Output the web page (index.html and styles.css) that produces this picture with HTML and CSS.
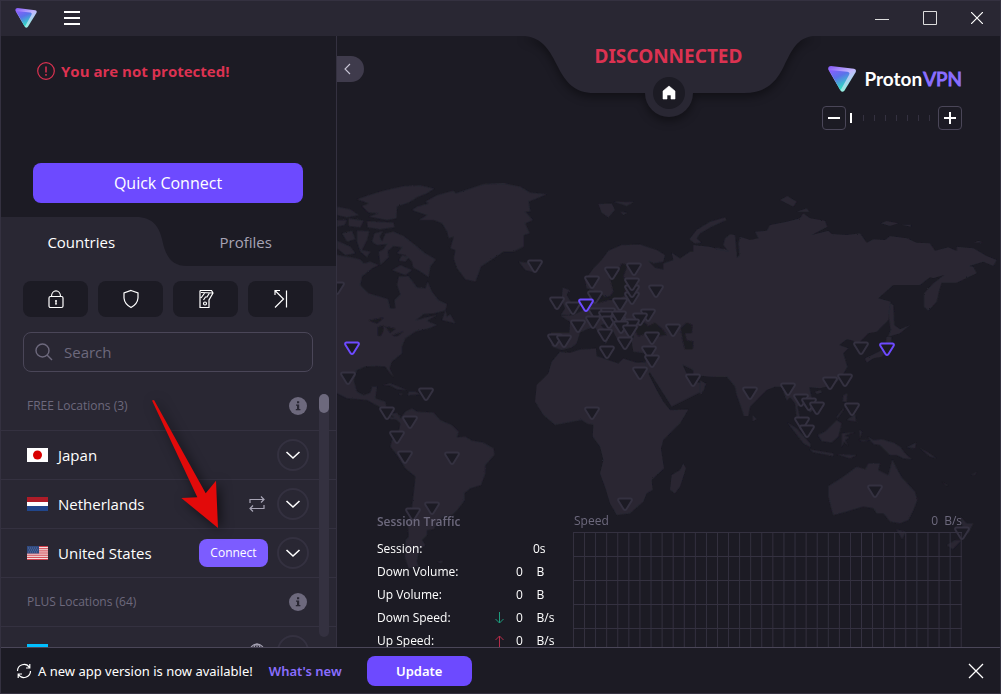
FILE: index.html
```html
<!DOCTYPE html>
<html lang="en">
<head>
<meta charset="utf-8">
<meta name="viewport" content="width=device-width, initial-scale=1">
<title>ProtonVPN</title>
<link rel="stylesheet" href="styles.css">
</head>
<body>
<svg class="defs" aria-hidden="true">
  <defs>
    <linearGradient id="logo-face" x1="0" y1="0" x2=".5" y2="1"><stop offset="0" stop-color="#8d5cff"/><stop offset=".45" stop-color="#5b72ea"/><stop offset="1" stop-color="#2fe0c4"/></linearGradient>
    <linearGradient id="logo-edge" x1="0" y1="0" x2=".6" y2="1"><stop offset="0" stop-color="#8355f7"/><stop offset=".5" stop-color="#c4b8ff"/><stop offset="1" stop-color="#8ff5dc"/></linearGradient>
    <symbol id="logo" viewBox="0 0 28 26"><path d="M3 0 26 2.800Q29 3.600 27.500 6.500L16.500 24.500Q14.300 27 12.500 24.500L.4 3.800Q-.6.3 3 0Z" fill="url(#logo-edge)"/><path d="M1 4 19.500 5.800Q22.500 6.500 21 9L13 23.500Q12.300 24 11.800 23.200Z" fill="url(#logo-face)"/></symbol>
    <symbol id="chevron" viewBox="0 0 16 16"><path d="M1.500 5 8 11 14.500 5" fill="none" stroke="#fff" stroke-width="1.600"/></symbol>
    <symbol id="info" viewBox="0 0 18 18"><circle cx="9" cy="9" r="9" fill="#6d697d"/><path d="M8 4.300h2.200v2H8ZM7 7.500h3.200V12h1.200v1.200H6.800V12H8V8.700H7Z" fill="#292733"/></symbol>
    <symbol id="pin" viewBox="-8 -7 16 14" overflow="visible"><path d="M-5.500-5.500H5.500Q7.700-5 6.500-3L1.400 5.200Q0 7-1.400 5.200L-6.500-3Q-7.700-5-5.500-5.500Z"/></symbol>
    <filter id="coast" x="0" y="0" width="1" height="1"><feTurbulence type="fractalNoise" baseFrequency=".12" numOctaves="3" seed="4"/><feDisplacementMap in="SourceGraphic" scale="5"/></filter>
  </defs>
</svg>

<header class="titlebar">
  <svg class="titlebar-logo" width="22" height="20" role="img" aria-label="ProtonVPN"><use href="#logo"/></svg>
  <button class="icon-btn menu-btn" aria-label="Menu"><svg width="16" height="14"><path d="M0 1h16M0 7h16M0 13h16" stroke="#fff" stroke-width="2"/></svg></button>
  <div class="window-buttons">
    <button class="icon-btn" aria-label="Minimize"><svg width="14" height="14"><path d="M0 8.500h14" stroke="#ddd"/></svg></button>
    <button class="icon-btn" aria-label="Maximize"><svg width="14" height="14"><path d="M.5.5h13v13H.5Z" fill="none" stroke="#ddd"/></svg></button>
    <button class="icon-btn" aria-label="Close"><svg width="12" height="12"><path d="M0 0 12 12M12 0 0 12" stroke="#fff" stroke-width="1.200"/></svg></button>
  </div>
</header>

<div class="content">
  <aside class="sidebar">
    <section class="status">
      <p class="status-text"><svg width="18" height="18" fill="none" stroke="#dc3251"><circle cx="9" cy="9" r="8.300" stroke-width="1.200"/><path d="M9 4.500v6M9 12v1.700" stroke-width="1.500"/></svg>You are not protected!</p>
      <button class="primary quick">Quick Connect</button>
    </section>
    <nav class="tabs" role="tablist">
      <svg class="tabs-shape" viewBox="0 0 335 49" preserveAspectRatio="none" aria-hidden="true"><path d="M0 0H135C152 0 158 10 161 22C164 37 169 49 186 49H0Z" fill="#292733"/></svg>
      <button class="tab active" role="tab" aria-selected="true">Countries</button>
      <button class="tab" role="tab" aria-selected="false">Profiles</button>
    </nav>
    <div class="filters">
      <button class="filter" aria-label="Secure Core"><svg width="18" height="20" fill="none" stroke="#fff" stroke-width="1.200"><rect x="2" y="7.500" width="14" height="11" rx="1.500"/><path d="M4.500 7.500C4.500 0 13.500 0 13.500 7.500M9 11v4.500M8 12h2M8 15h2"/></svg></button>
      <button class="filter" aria-label="NetShield"><svg width="18" height="20" fill="none" stroke="#fff" stroke-width="1.200"><path d="M9 1.500 16 4V9Q15.500 15 9 18.500Q2.500 15 2 9V4Z"/></svg></button>
      <button class="filter" aria-label="Kill Switch"><svg width="18" height="20" fill="none" stroke="#fff" stroke-width="1.200"><path d="M3 1.500H14.500L16 4 12 11V18.500H3V1.500M4 3.500 15.500 4M4 9 8 3.500M6.500 11 8.500 8H10L12.500 4"/><circle cx="8" cy="14.500" r="1.500"/></svg></button>
      <button class="filter" aria-label="Port Forwarding"><svg width="18" height="20" fill="none" stroke="#fff" stroke-width="1.200"><path d="M3 18.500 11.500 10 3 1.500M3 6V1.500H8M14.500 1.500V18.500"/></svg></button>
    </div>
    <label class="search">
      <svg width="18" height="18" fill="none" stroke="#6d697d" stroke-width="1.400"><circle cx="7.500" cy="7.500" r="6.500"/><path d="M12 12 17 17"/></svg>
      <input type="search" placeholder="Search" aria-label="Search">
    </label>
    <div class="list-area">
      <ul class="list">
        <li class="row group"><span>FREE Locations (3)</span><svg class="info" width="18" height="18"><use href="#info"/></svg></li>
        <li class="row">
          <svg class="flag" width="21" height="14"><path fill="#fff" d="M0 0h21v14H0Z"/><circle cx="10.500" cy="7" r="4.500" fill="#d80000"/></svg>
          <span class="country">Japan</span>
          <button class="expand" aria-label="Show Japan servers"><svg width="16" height="16"><use href="#chevron"/></svg></button>
        </li>
        <li class="row">
          <svg class="flag" width="21" height="14"><path fill="#fff" d="M0 0h21v14H0Z"/><path fill="#ae1c28" d="M0 0h21v5H0Z"/><path fill="#21468b" d="M0 9h21v5H0Z"/></svg>
          <span class="country">Netherlands</span>
          <svg class="p2p" width="16" height="16" fill="none" stroke="#a7a4b5" stroke-width="1.200"><path d="M1 7V3.500H15M12 .5 15 3.500 12 6.500M15 9V12.500H1M4 9.500 1 12.500 4 15.500"/></svg>
          <button class="expand" aria-label="Show Netherlands servers"><svg width="16" height="16"><use href="#chevron"/></svg></button>
        </li>
        <li class="row">
          <svg class="flag" width="21" height="14"><path fill="#f4dede" d="M0 0h21v14H0Z"/><path stroke="#cf3f4c" d="M0 .5h21M0 2.700h21M0 4.900h21M0 7h21M0 9.200h21M0 11.400h21M0 13.500h21"/><path fill="#304a80" d="M0 0h12v7.500H0Z"/><path stroke="#7c8db5" stroke-dasharray="1 1" stroke-width=".6" d="M1 2h10M2 4h10M1 6h10"/></svg>
          <span class="country">United States</span>
          <button class="connect">Connect</button>
          <button class="expand" aria-label="Show United States servers"><svg width="16" height="16"><use href="#chevron"/></svg></button>
        </li>
        <li class="row group"><span>PLUS Locations (64)</span><svg class="info" width="18" height="18"><use href="#info"/></svg></li>
        <li class="row">
          <svg class="flag" width="21" height="14"><path fill="#00bfff" d="M0 0h21v14H0Z"/></svg>
          <span class="country muted">Argentina</span>
          <svg class="p2p" width="16" height="16" fill="none" stroke="#a7a4b5" stroke-width="1.200"><circle cx="8" cy="8" r="7"/><ellipse cx="8" cy="8" rx="3.500" ry="7"/><path d="M8 1v14M1 8h14M2 4.500h12"/></svg>
          <button class="expand" aria-label="Show Argentina servers"><svg width="16" height="16"><use href="#chevron"/></svg></button>
        </li>
      </ul>
      <div class="scrollbar"><div class="thumb"></div></div>
    </div>
  </aside>

  <main class="map-pane">
    <svg class="map" viewBox="0 -3 1989 1833" preserveAspectRatio="xMidYMin slice" role="img" aria-label="World map">
      <g fill="#292733" filter="url(#coast)">
        <!-- North America, Arctic islands, Greenland -->
        <g transform="translate(0 399)">
          <path d="M-10 252 20 258 45 262 70 268 80 280 100 275 125 285 105 295 75 320 70 345 95 370 130 380 153 387 160 415 175 415 172 390 190 372 180 345 185 320 215 318 240 352 265 355 272 335 285 365 305 390 330 402 325 422 290 430 260 432 238 450 265 443 300 435 270 452 300 465 275 475 235 485 205 505 195 530 195 550 165 575 158 595 170 622 155 605 145 590 120 588 85 590 60 600 50 630 60 665 80 675 100 668 105 650 120 650 115 685 145 695 150 720 165 742 190 735 185 750 160 747 130 712 90 690 30 685-10 665Z"/>
          <path d="M225 120 240 110 275 100 265 95 300 75 350 62 355 70 400 55 440 42 500 40 550 50 580 68 630 72 600 85 575 95 580 125 565 125 588 150 565 160 578 190 560 195 560 230 530 245 500 245 470 265 432 290 425 310 415 335 395 330 385 328 360 295 350 265 355 240 340 235 350 200 335 205 330 185 315 160 290 150 245 150 270 135Z"/>
          <path d="M60 88 95 75 140 62 200 48 250 46 292 56 270 70 240 82 215 98 180 110 178 145 150 150 95 140 125 130 95 128 75 108 95 100Z"/>
          <path d="M90 153 170 158 172 172 130 178 92 172ZM35 145 80 152 70 172 35 168ZM0 150 30 150 22 165 0 170ZM0 110 40 118 65 135 30 142 0 135ZM60 182 97 183 90 210 75 240 100 245 90 262 70 245 60 215ZM15 190 45 182 55 208 30 215ZM0 212 40 230 55 250 25 255 0 235Z"/>
          <path d="M105 215 112 190 138 183 128 200 135 215 145 190 170 185 200 198 235 225 265 250 297 268 280 290 275 322 250 305 228 292 225 275 205 255 180 250 195 232 170 228 150 245 130 250 150 222 120 225ZM195 255 215 262 205 275 185 272ZM125 245 150 232 155 262 130 285ZM190 285 225 300 205 315 165 300Z"/>
          <path d="M325 420 315 450 355 460 340 432 330 440ZM545 275 570 278 590 270 612 285 590 306 565 300Z"/>
        </g>
        <!-- Caribbean and South America -->
        <g transform="translate(0 909)">
          <path d="M137 135 160 130 185 140 210 150 180 148 160 137ZM215 155 235 155 250 163 212 166ZM185 160 198 162 190 166Z"/>
          <path d="M160 222 180 218 190 235 205 215 225 205 240 215 290 218 310 240 345 255 365 275 360 292 385 290 405 302 440 308 470 325 472 345 445 375 445 400 432 435 400 445 382 460 383 480 365 505 345 525 320 530 300 550 290 568 270 570 270 585 255 600 265 615 245 630 240 665 245 680 215 685 203 650 207 620 205 600 215 590 213 560 225 500 232 440 235 410 205 385 180 345 160 320 165 300 185 275 190 250Z"/>
          <path d="M300 665 318 662 312 670Z"/>
        </g>
        <!-- Africa -->
        <g transform="translate(549 909)">
          <path d="M120 35 150 38 180 28 228 25 230 48 295 70 310 55 350 68 385 66 400 90 385 100 410 150 430 185 450 210 505 208 480 250 430 300 423 325 432 385 395 420 398 450 380 460 370 485 330 520 290 525 270 490 258 450 240 400 250 360 240 320 218 290 220 255 200 250 185 240 105 255 70 225 45 185 50 135 85 100 95 65Z"/>
          <path d="M490 370 498 385 480 440 465 460 450 450 455 405 480 390Z"/>
        </g>
        <!-- Europe and the Middle East -->
        <g transform="translate(579 489)">
          <path d="M165 240 190 205 215 180 235 152 275 135 330 133 380 150 405 165 400 185 370 190 355 183 375 203 400 208 400 190 430 180 425 158 450 175 480 155 520 155 560 143 620 155 620 530 560 530 515 525 480 505 458 495 470 520 485 545 530 550 515 575 425 620 355 510 345 500 350 460 310 455 305 425 312 408 295 408 288 445 268 430 250 395 228 372 212 375 240 405 228 432 210 405 193 380 170 388 150 397 140 430 125 442 95 450 65 440 62 398 118 398 120 365 92 348 130 345 160 330 178 305 178 270 205 270 205 292 250 300 270 290 285 262 260 285 225 292 205 272 170 265Z"/>
          <path d="M98 262 118 270 110 285 125 310 135 325 118 345 92 345 105 325 95 300ZM70 325 80 300 98 310 85 328Z"/>
          <path d="M205 12 245 10 255 30 235 52 215 38ZM250 5 312 6 290 18ZM270 35 292 38 280 45ZM478 118 500 90 540 65 585 52 590 60 545 80 510 100 500 115 515 128 495 130Z"/>
        </g>
        <!-- Asia -->
        <g transform="translate(1089 459)">
          <path d="M-20 165 30 170 60 180 85 185 70 165 75 145 90 133 105 135 108 165 110 205 118 195 115 160 120 140 150 150 175 145 165 125 200 122 210 105 260 95 300 85 310 70 330 85 375 92 382 110 335 135 385 122 395 132 440 135 480 130 500 158 520 148 555 150 570 138 620 145 650 158 690 160 705 182 745 172 770 183 770 170 820 175 860 198 890 210 880 228 850 215 808 228 820 230 830 250 770 278 725 278 718 300 710 335 685 362 672 350 672 310 700 280 732 255 700 265 690 262 660 285 580 285 535 325 572 335 565 390 530 425 505 430 480 455 493 480 478 488 460 452 440 448 418 465 445 475 430 490 442 530 425 560 400 585 360 595 328 592 335 625 350 650 330 668 305 638 293 650 300 685 325 712 315 715 290 685 285 640 270 622 260 632 245 590 225 590 200 600 150 650 145 678 132 678 110 615 105 590 80 560 30 560-20 555Z"/>
          <path d="M240 30 262 18 290 35 280 50ZM290 65 320 55 328 65ZM542 100 560 93 595 100 570 108ZM605 104 632 104 632 110ZM822 158 835 152 848 157ZM570 340 580 345 583 405 600 418 630 405 600 430 565 440 572 420 566 380ZM560 440 575 442 570 475 545 500 520 505 500 518 495 505 530 488 555 475Z"/>
          <path d="M345 605 362 600 365 608 350 612ZM158 675 170 688 158 694ZM0 570 15 580 12 600 0 615Z"/>
        </g>
        <!-- South-east Asia and Oceania -->
        <g transform="translate(1089 909)">
          <path d="M262 248 290 265 330 310 332 322 310 310ZM328 328 400 340 400 348 340 337ZM410 343 470 345 450 355ZM353 285 375 275 410 240 425 250 415 290 395 308 365 303ZM430 165 442 160 440 185 428 185ZM440 240 465 222 468 245 450 242ZM410 230 430 205 432 208 412 235ZM425 280 465 277 432 287 448 292 435 300 445 318 432 305 425 322ZM478 270 486 275 480 295ZM475 300 510 300 490 304Z"/>
          <path d="M503 290 520 300 545 298 580 308 600 320 615 340 635 358 610 355 590 345 570 345 540 315 520 312ZM620 322 648 308 645 325ZM660 325 680 335 710 355 690 350ZM725 425 745 437 740 437ZM812 405 830 396 825 404Z"/>
          <path d="M385 438 430 410 450 395 470 380 495 388 505 370 540 370 535 390 565 405 570 385 577 358 590 385 605 412 645 455 652 480 640 510 625 540 600 550 570 545 550 520 530 520 520 505 490 500 440 515 400 525 395 510 385 470ZM588 568 617 575 607 598ZM780 528 800 550 820 550 805 580 790 570ZM765 600 785 600 758 628 740 615Z"/>
        </g>
      </g>
      <!-- Inland seas -->
      <g fill="#1c1b24" filter="url(#coast)">
        <path d="M95 850 140 842 120 860ZM123 870 138 865 140 880 130 898 123 895ZM145 868 175 875 160 888ZM165 895 200 883 180 898Z"/>
        <g transform="translate(579 489)">
          <path d="M275 190 292 195 280 230 290 245 320 240 325 248 288 255 285 285 265 300 235 300 200 310 200 295 240 290 250 275 240 235 262 220Z"/>
          <path d="M315 392 340 365 355 378 375 368 400 390 410 405 375 408 350 400 325 408ZM452 385 470 368 488 375 485 400 465 400 470 420 490 425 488 448 465 448 458 420Z"/>
        </g>
      </g>
      <g class="pins" transform="scale(3) translate(-345 -44)">
        <g class="pin-off">
          <use href="#pin" x="337" y="288" width="16" height="14"/><use href="#pin" x="535" y="266" width="16" height="14"/><use href="#pin" x="557" y="303" width="16" height="14"/><use href="#pin" x="573" y="308" width="16" height="14"/><use href="#pin" x="592" y="282" width="16" height="14"/><use href="#pin" x="612" y="273" width="16" height="14"/><use href="#pin" x="632" y="298" width="16" height="14"/><use href="#pin" x="632" y="291" width="16" height="14"/><use href="#pin" x="632" y="284" width="16" height="14"/><use href="#pin" x="634" y="269" width="16" height="14"/><use href="#pin" x="656" y="291" width="16" height="14"/><use href="#pin" x="595" y="297" width="16" height="14"/><use href="#pin" x="596" y="314" width="16" height="14"/><use href="#pin" x="608" y="314" width="16" height="14"/><use href="#pin" x="606" y="317" width="16" height="14"/><use href="#pin" x="609" y="322" width="16" height="14"/><use href="#pin" x="618" y="322" width="16" height="14"/><use href="#pin" x="619" y="317" width="16" height="14"/><use href="#pin" x="620" y="304" width="16" height="14"/><use href="#pin" x="578" y="326" width="16" height="14"/><use href="#pin" x="555" y="340" width="16" height="14"/><use href="#pin" x="564" y="341" width="16" height="14"/><use href="#pin" x="593" y="322" width="16" height="14"/><use href="#pin" x="605" y="335" width="16" height="14"/><use href="#pin" x="607" y="352" width="16" height="14"/><use href="#pin" x="648" y="315" width="16" height="14"/><use href="#pin" x="640" y="319" width="16" height="14"/><use href="#pin" x="632" y="325" width="16" height="14"/><use href="#pin" x="621" y="327" width="16" height="14"/><use href="#pin" x="630" y="331" width="16" height="14"/><use href="#pin" x="625" y="343" width="16" height="14"/><use href="#pin" x="652" y="338" width="16" height="14"/><use href="#pin" x="673" y="330" width="16" height="14"/><use href="#pin" x="649" y="352" width="16" height="14"/><use href="#pin" x="652" y="361" width="16" height="14"/><use href="#pin" x="640" y="373" width="16" height="14"/><use href="#pin" x="693" y="380" width="16" height="14"/><use href="#pin" x="592" y="413" width="16" height="14"/><use href="#pin" x="625" y="504" width="16" height="14"/><use href="#pin" x="750" y="393" width="16" height="14"/><use href="#pin" x="788" y="389" width="16" height="14"/><use href="#pin" x="801" y="400" width="16" height="14"/><use href="#pin" x="809" y="404" width="16" height="14"/><use href="#pin" x="817" y="408" width="16" height="14"/><use href="#pin" x="830" y="383" width="16" height="14"/><use href="#pin" x="845" y="380" width="16" height="14"/><use href="#pin" x="852" y="409" width="16" height="14"/><use href="#pin" x="802" y="423" width="16" height="14"/><use href="#pin" x="807" y="431" width="16" height="14"/><use href="#pin" x="861" y="348" width="16" height="14"/><use href="#pin" x="875" y="491" width="16" height="14"/><use href="#pin" x="962" y="533" width="16" height="14"/><use href="#pin" x="348" y="378" width="16" height="14"/><use href="#pin" x="426" y="394" width="16" height="14"/><use href="#pin" x="387" y="413" width="16" height="14"/><use href="#pin" x="410" y="422" width="16" height="14"/><use href="#pin" x="397" y="437" width="16" height="14"/><use href="#pin" x="405" y="457" width="16" height="14"/><use href="#pin" x="452" y="458" width="16" height="14"/><use href="#pin" x="432" y="508" width="16" height="14"/><use href="#pin" x="413" y="514" width="16" height="14"/>
        </g>
        <g class="pin-on">
          <use href="#pin" x="352" y="348" width="16" height="14"/><use href="#pin" x="586" y="305" width="16" height="14"/><use href="#pin" x="887" y="349" width="16" height="14"/>
        </g>
      </g>
    </svg>

    <button class="collapse" aria-label="Collapse sidebar"><svg width="8" height="12"><path d="M7 1 2 6 7 11" fill="none" stroke="#c9c6d6" stroke-width="1.100"/></svg></button>

    <div class="banner">
      <svg class="banner-shape" width="288" height="84" viewBox="525 36 288 84" aria-hidden="true"><path d="M525 34V36C543 38 550 51 558 67C566 83 575 93 594 93H645A24 24 0 0 0 693 93H744C765 93 776 83 784 66C792 50 797 38 813 36V34Z" fill="#292733"/><circle cx="669" cy="93" r="16" fill="#1c1b24"/><path d="M669 86 675 91V99H671V95H667V99H663V91Z" fill="#fff" stroke="#fff" stroke-linejoin="round" stroke-width=".6"/></svg>
      <strong class="banner-text">DISCONNECTED</strong>
    </div>

    <div class="brand">
      <div class="brand-name"><svg width="28" height="26" aria-hidden="true"><use href="#logo"/></svg><span>Proton<b>VPN</b></span></div>
      <div class="zoom">
        <button class="zoom-btn" aria-label="Zoom out"><svg width="12" height="12"><path d="M0 6h12" stroke="#fff" stroke-width="2"/></svg></button>
        <input class="zoom-range" type="range" min="0" max="7" value="0" aria-label="Map zoom">
        <button class="zoom-btn" aria-label="Zoom in"><svg width="12" height="12"><path d="M0 6h12M6 0v12" stroke="#fff" stroke-width="2"/></svg></button>
      </div>
    </div>

    <section class="stats">
      <div class="traffic">
        <h2>Session Traffic</h2>
        <table>
          <tr><th>Session:</th><td class="dir"></td><td class="session" colspan="2">0s</td></tr>
          <tr><th>Down Volume:</th><td class="dir"></td><td class="num">0</td><td>B</td></tr>
          <tr><th>Up Volume:</th><td class="dir"></td><td class="num">0</td><td>B</td></tr>
          <tr><th>Down Speed:</th><td class="dir"><svg width="9" height="12" fill="none" stroke="#1c9c7c"><path d="M4.500 0v11M.5 7 4.500 11 8.500 7"/></svg></td><td class="num">0</td><td>B/s</td></tr>
          <tr><th>Up Speed:</th><td class="dir"><svg width="9" height="12" fill="none" stroke="#b52c49"><path d="M4.500 12V1M.5 5 4.500 1 8.500 5"/></svg></td><td class="num">0</td><td>B/s</td></tr>
        </table>
      </div>
      <div class="speed">
        <div class="speed-head"><span>Speed</span><span class="rate"><span>0</span><span>B/s</span></span></div>
        <div class="graph"></div>
      </div>
    </section>
  </main>
</div>

<footer class="update-bar">
  <svg width="16" height="16" fill="none" stroke="#fff" stroke-width="1.200"><path d="M1.500 8A6.500 6.500 0 0 1 13.500 4.500M13.800 1V5H10M14.500 8A6.500 6.500 0 0 1 2.500 11.500M2.200 15V11H6"/></svg>
  <span class="update-text">A new app version is now available!</span>
  <a class="whats-new" href="#">What's new</a>
  <button class="primary update">Update</button>
  <button class="icon-btn dismiss" aria-label="Dismiss"><svg width="16" height="16"><path d="M1 1 15 15M15 1 1 15" stroke="#fff" stroke-width="1.300"/></svg></button>
</footer>

<svg class="pointer" width="80" height="140" viewBox="150 398 80 140" aria-hidden="true"><path d="M152 400.500 154 400 205.700 493.300 216 480.700 218 528 181.300 498 197.300 497.300Z" fill="#e20a0a"/></svg>
</body>
</html>
```
FILE: styles.css
```css
* { box-sizing: border-box; }
:root {
  --bg: #1c1b24;
  --panel: #292733;
  --line: #343140;
  --weak: #6d697d;
  --purple: #6d4aff;
  --red: #dc3251;
}
body {
  margin: 0;
  height: 100vh;
  display: flex;
  flex-direction: column;
  overflow: hidden;
  border: 1px solid var(--line);
  background: var(--bg);
  color: #fff;
  font: 15px/20px "Open Sans", "Noto Sans", sans-serif;
}
button { font: inherit; color: inherit; border: 0; padding: 0; background: none; cursor: pointer; }
svg { display: block; flex: none; }
.defs { position: absolute; width: 0; height: 0; }
.icon-btn { display: grid; place-items: center; }

.titlebar { flex: none; height: 35px; padding: 0 17px 2px 14px; display: flex; align-items: center; background: var(--panel); }
.menu-btn { margin-left: 27px; }
.window-buttons { margin-left: auto; display: flex; gap: 34px; align-items: center; }

.content { flex: 1; min-height: 0; display: flex; }
.sidebar { flex: none; width: 336px; display: flex; flex-direction: column; min-height: 0; border-right: 1px solid var(--line); background: var(--panel); }
.status { height: 181px; padding: 25px 33px 14px 32px; display: flex; flex-direction: column; justify-content: space-between; background: var(--bg); flex: none; }
.status-text { margin: 0 0 0 4px; display: flex; align-items: center; gap: 6px; font-weight: 700; color: var(--red); }
.primary { background: var(--purple); border-radius: 8px; }
.quick { height: 40px; font-size: 16px; }

.tabs { position: relative; flex: none; height: 49px; display: flex; background: var(--bg); }
.tabs-shape { position: absolute; inset: 0; width: 100%; height: 100%; }
.tab { position: relative; flex: 1; color: #a7a4b5; padding-right: 4px; }
.tab.active { color: #fff; }
.tab:last-child { padding-right: 10px; }

.filters { flex: none; display: flex; gap: 10px; padding: 15px 23px 15px 22px; }
.filter { flex: 1; height: 36px; display: grid; place-items: center; background: var(--bg); border-radius: 8px; }
.search { flex: none; margin: 0 23px 0 22px; height: 40px; padding: 0 11px; display: flex; align-items: center; gap: 11px; border: 1px solid #4a4658; border-radius: 8px; }
.search input { flex: 1; min-width: 0; border: 0; padding: 0; outline: 0; background: none; color: #fff; font: inherit; }
.search input::placeholder { color: var(--weak); opacity: 1; }

.list-area { position: relative; flex: 1; min-height: 0; margin-top: 10px; overflow: hidden; }
.list { list-style: none; margin: 0; padding: 0; }
.row { height: 49px; padding: 0 27px 0 26px; display: flex; align-items: center; border-bottom: 1px solid var(--line); }
.group { font-size: 12px; color: var(--weak); padding-right: 29px; }
.group .info { margin-left: auto; }
.flag { margin-right: 10px; }
.country { flex: 1; }
.muted { color: var(--weak); }
.p2p { margin-right: 12px; }
.expand { flex: none; width: 32px; height: 32px; display: grid; place-items: center; border: 2px solid var(--line); border-radius: 50%; }
.connect { width: 69px; height: 28px; margin-right: 9px; border-radius: 8px; background: #7c5cff; font-size: 12px; }
.scrollbar { position: absolute; top: 12px; bottom: 10px; right: 7px; width: 10px; border-radius: 5px; background: var(--line); }
.thumb { height: 19px; border-radius: 5px; background: var(--weak); }

.map-pane { position: relative; flex: 1; min-width: 0; display: flex; flex-direction: column; justify-content: space-between; overflow: hidden; }
.map { position: absolute; inset: 0; width: 100%; height: 100%; }
.pins use { fill: var(--bg); stroke-width: 2px; }
.pin-off { stroke: var(--line); }
.pin-on { stroke: var(--purple); }
.collapse { position: absolute; left: 0; top: 20px; width: 27px; height: 26px; display: grid; place-items: center start; padding-left: 6px; background: #3f3b4c; border-radius: 0 13px 13px 0; }
.banner { position: absolute; top: 0; left: 0; right: 0; display: grid; justify-items: center; }
.banner-shape { grid-area: 1 / 1; filter: drop-shadow(0 4px 5px #0006); overflow: visible; }
.banner-text { grid-area: 1 / 1; position: relative; padding-top: 8px; font: 700 19px/24px "Noto Sans", sans-serif; color: var(--red); }

.brand { position: relative; align-self: flex-end; padding: 29px 38px 0 0; }
.brand-name { display: flex; align-items: center; gap: 8px; padding-left: 6px; font: 700 19px/28px Lato, sans-serif; }
.brand-name b { font-weight: 400; margin-left: 1px; color: #8a6eff; -webkit-text-stroke: 1px #8a6eff; }
.zoom { display: flex; align-items: center; margin-top: 13px; }
.zoom-btn { width: 24px; height: 24px; display: grid; place-items: center; border: 1px solid #4a4658; border-radius: 4px; }
.zoom-range { appearance: none; flex: 1; width: 81px; height: 12px; margin: 0 4px; background: repeating-linear-gradient(90deg, transparent 0 10px, var(--line) 10px 11px) 3px center / 77px 6px no-repeat; }
.zoom-range::-webkit-slider-thumb { appearance: none; width: 2px; height: 10px; background: #fff; }

.stats { position: relative; height: 135px; padding: 0 38px 0 40px; display: flex; gap: 16px; overflow: hidden; font-size: 12px; line-height: 16px; }
.traffic { flex: none; width: 180px; }
.traffic h2 { margin: 2px 0 7px; font-size: 12px; line-height: 16px; font-weight: 600; color: var(--weak); }
.traffic table { width: 100%; table-layout: fixed; border-collapse: collapse; }
.traffic th { width: 118px; padding: 0; text-align: left; font-weight: 400; }
.traffic td { padding: 0; height: 23px; }
.traffic .dir { width: 21px; }
.traffic .num { width: 22px; }
.traffic .session { padding-left: 17px; }
.speed { flex: 1; min-width: 0; }
.speed-head { display: flex; justify-content: space-between; margin: 1px 0 3px; padding-left: 1px; color: var(--weak); }
.rate { display: flex; gap: 6px; }
.graph {
  height: 140px;
  background:
    linear-gradient(var(--line) 1px, transparent 1px) 0 0 / 100% 24px,
    linear-gradient(90deg, var(--line) 1px, transparent 1px) 0 0 / calc((100% - 1px) / 35) 100%;
}

.update-bar { flex: none; height: 46px; padding: 0 16px 0 15px; display: flex; align-items: center; border-top: 1px solid #4a4658; font-family: "Noto Sans", sans-serif; font-size: 13px; }
.update-text { margin-left: 6px; }
.whats-new { margin-left: 16px; color: #8a6eff; font-weight: 600; text-decoration: none; }
.update { width: 105px; height: 30px; margin-left: 25px; font-weight: 600; }
.dismiss { margin-left: auto; }
.pointer { position: absolute; left: 150px; top: 398px; pointer-events: none; filter: drop-shadow(3px 2px 6px #0009); }
```
